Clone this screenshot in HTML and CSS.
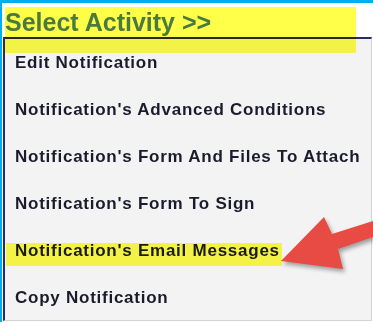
FILE: index.html
```html
<!DOCTYPE html>
<html>
<head>
<meta charset="utf-8">
<link rel="stylesheet" href="styles.css">
</head>
<body>
<div class="frame">
  <div class="title">Select Activity &gt;&gt;</div>
  <ul class="menu">
    <li>Edit Notification</li>
    <li>Notification's Advanced Conditions</li>
    <li>Notification's Form And Files To Attach</li>
    <li>Notification's Form To Sign</li>
    <li>Notification's Email Messages</li>
    <li>Copy Notification</li>
  </ul>
  <div class="hl hl-title"></div>
  <div class="hl hl-email"></div>
  <svg class="arrow" width="373" height="322" viewBox="0 0 373 322">
    <polygon points="281,261 324,217 332,234 373,221 373,237 338,249 343,269" fill="#e84a44"/>
  </svg>
</div>
</body>
</html>
```
FILE: styles.css
```css
html, body {
  margin: 0;
  padding: 0;
  background: #ffffff;
}
.frame {
  position: relative;
  width: 373px;
  height: 322px;
  box-sizing: border-box;
  border-top: 3px solid #00aeef;
  border-left: 2px solid #00aeef;
  overflow: hidden;
}
.title {
  position: relative;
  z-index: 2;
  height: 34px;
  box-sizing: border-box;
  padding: 4px 0 0 3px;
  font-family: "Liberation Sans", Arial, sans-serif;
  font-weight: bold;
  font-size: 25px;
  line-height: 30px;
  color: #4b7a3e;
  white-space: nowrap;
}
.menu {
  list-style: none;
  margin: 0 1px 0 1px;
  padding: 0 0 0 10px;
  height: 284px;
  box-sizing: border-box;
  border-top: 2px solid #2a2a6a;
  border-left: 2px solid #2a2a72;
  border-right: 1px solid #d2d2d2;
  border-bottom: 1px solid #d2d2d2;
  background: #f3f3f3;
  overflow: hidden;
}
.menu li {
  height: 47px;
  font-family: "Liberation Sans", Arial, sans-serif;
  font-weight: bold;
  font-size: 17px;
  line-height: 47px;
  letter-spacing: 0.75px;
  color: #1b1b2e;
  white-space: nowrap;
}
.hl {
  position: absolute;
  z-index: 1;
  background: #ffff4a;
  mix-blend-mode: multiply;
}
.hl-title {
  left: 3px;
  top: 4px;
  width: 351px;
  height: 46px;
}
.hl-email {
  left: 4px;
  top: 240px;
  width: 276px;
  height: 23px;
}
.arrow {
  position: absolute;
  z-index: 3;
  left: -2px;
  top: -3px;
  filter: drop-shadow(2px 3px 2px rgba(0, 0, 0, 0.35));
}
```
